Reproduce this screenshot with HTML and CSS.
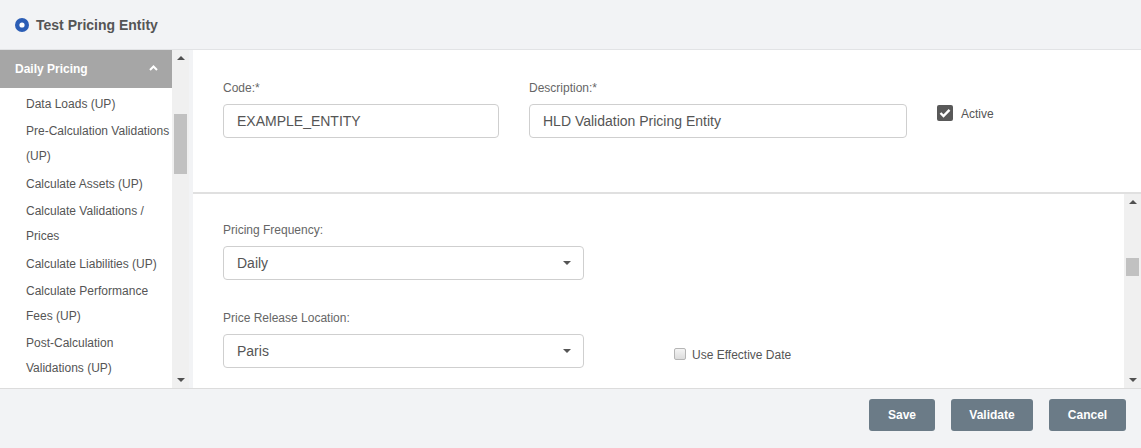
FILE: index.html
```html
<!DOCTYPE html>
<html>
<head>
<meta charset="utf-8">
<link rel="stylesheet" href="styles.css">
</head>
<body>
<header class="header">
  <svg class="dot-icon" width="14" height="14" viewBox="0 0 14 14"><circle cx="7" cy="7" r="7" fill="#2b5db5"/><circle cx="7" cy="7" r="2.6" fill="#fff"/></svg>
  <span class="title">Test Pricing Entity</span>
</header>
<div class="workspace">
  <aside class="sidebar">
    <nav class="nav">
      <div class="nav-head"><span>Daily Pricing</span>
        <svg class="chev" width="9" height="6" viewBox="0 0 9 6"><path d="M1 5 L4.5 1.5 L8 5" fill="none" stroke="#fff" stroke-width="2"/></svg>
      </div>
      <ul class="nav-list">
        <li>Data Loads (UP)</li>
        <li>Pre-Calculation Validations (UP)</li>
        <li>Calculate Assets (UP)</li>
        <li>Calculate Validations / Prices</li>
        <li>Calculate Liabilities (UP)</li>
        <li>Calculate Performance Fees (UP)</li>
        <li>Post-Calculation Validations (UP)</li>
      </ul>
    </nav>
    <div class="vscroll">
      <span class="arrow up"></span>
      <div class="track"><div class="thumb side-thumb"></div></div>
      <span class="arrow down"></span>
    </div>
  </aside>
  <main class="main">
    <section class="top">
      <div class="field code">
        <label class="lbl">Code:*</label>
        <div class="input">EXAMPLE_ENTITY</div>
      </div>
      <div class="field desc">
        <label class="lbl">Description:*</label>
        <div class="input">HLD Validation Pricing Entity</div>
      </div>
      <div class="active">
        <span class="cb-on"><svg width="12" height="10" viewBox="0 0 12 10"><path d="M1.5 5 L4.5 8 L10.5 1.8" fill="none" stroke="#fff" stroke-width="2.4"/></svg></span>
        <span class="cb-text">Active</span>
      </div>
    </section>
    <section class="bottom">
      <div class="bottom-content">
        <div class="field sel-field">
          <label class="lbl">Pricing Frequency:</label>
          <div class="input select">Daily<span class="caret"></span></div>
        </div>
        <div class="row2">
          <div class="field sel-field">
            <label class="lbl">Price Release Location:</label>
            <div class="input select">Paris<span class="caret"></span></div>
          </div>
          <div class="eff">
            <span class="cb-off"></span>
            <span class="cb-text">Use Effective Date</span>
          </div>
        </div>
      </div>
      <div class="vscroll">
        <span class="arrow up"></span>
        <div class="track"><div class="thumb main-thumb"></div></div>
        <span class="arrow down"></span>
      </div>
    </section>
  </main>
</div>
<footer class="footer">
  <button class="btn w-save">Save</button>
  <button class="btn w-validate">Validate</button>
  <button class="btn w-cancel">Cancel</button>
</footer>
</body>
</html>
```

FILE: styles.css
```css
* { box-sizing: border-box; }
html, body { margin: 0; padding: 0; }
body {
  width: 1141px;
  height: 448px;
  overflow: hidden;
  font-family: "Liberation Sans", Arial, sans-serif;
  background: #f2f3f5;
  color: #555;
}
.header {
  height: 50px;
  border-bottom: 1px solid #e2e3e5;
  display: flex;
  align-items: center;
  padding-left: 15px;
  gap: 7px;
}
.dot-icon { display: block; }
.title {
  font-size: 14px;
  font-weight: bold;
  color: #555;
}
.workspace {
  display: flex;
  height: 338px;
}
.sidebar {
  display: flex;
  width: 189px;
  margin-right: 4px;
  height: 100%;
}
.nav {
  width: 172px;
  background: #fff;
  overflow: hidden;
}
.nav-head {
  height: 38px;
  background: #a6a6a6;
  color: #fff;
  font-size: 12px;
  font-weight: bold;
  display: flex;
  align-items: center;
  justify-content: space-between;
  padding: 0 14px 0 15px;
}
.chev { display: block; margin-top: -3px; }
.nav-list {
  list-style: none;
  margin: 0;
  padding: 3px 0 0 26px;
  font-size: 12px;
  line-height: 25px;
  color: #555;
}
.nav-list li { padding: 1px 0 1.4px; }
.vscroll {
  width: 17px;
  flex: none;
  background: #f0f0f0;
  display: flex;
  flex-direction: column;
  align-items: center;
}
.track { flex: 1; width: 100%; position: relative; }
.thumb {
  position: absolute;
  left: 2px;
  right: 2px;
  background: #c1c1c1;
}
.side-thumb { top: 48px; height: 60px; }
.main-thumb { top: 48px; height: 18px; }
.arrow {
  width: 0; height: 0;
  border-left: 4px solid transparent;
  border-right: 4px solid transparent;
  margin: 6px 0;
}
.arrow.up { border-bottom: 4px solid #505050; }
.arrow.down { border-top: 4px solid #505050; }
.main {
  flex: 1;
  display: flex;
  flex-direction: column;
}
.top {
  height: 144px;
  background: #fff;
  border-bottom: 2px solid #e0e0e0;
  display: flex;
  align-items: flex-start;
  padding: 30px 0 0 30px;
  gap: 30px;
}
.field { display: flex; flex-direction: column; }
.lbl {
  font-size: 12px;
  line-height: 17px;
  color: #666;
  margin-bottom: 7px;
}
.input {
  height: 34px;
  border: 1px solid #cfcfcf;
  border-radius: 4px;
  font-size: 14px;
  color: #555;
  padding-left: 13px;
  display: flex;
  align-items: center;
}
.code { width: 276px; }
.desc { width: 378px; }
.active {
  display: flex;
  align-items: center;
  gap: 8px;
  margin-top: 25px;
}
.cb-on {
  width: 16px; height: 16px;
  background: #595959;
  border-radius: 2px;
  display: flex;
  align-items: center;
  justify-content: center;
}
.cb-on svg { display: block; }
.cb-text { font-size: 12px; color: #555; }
.active .cb-text { margin-top: 1px; }
.bottom {
  flex: 1;
  background: #fff;
  display: flex;
}
.bottom-content {
  flex: 1;
  padding: 28px 0 0 30px;
  display: flex;
  flex-direction: column;
  gap: 30px;
}
.sel-field { width: 361px; }
.select { justify-content: space-between; padding-right: 12px; }
.caret {
  width: 0; height: 0;
  border-left: 4px solid transparent;
  border-right: 4px solid transparent;
  border-top: 4px solid #555;
}
.row2 { display: flex; align-items: flex-end; gap: 90px; }
.eff {
  display: flex;
  align-items: center;
  gap: 6px;
  margin-bottom: 6px;
}
.eff .cb-text { margin-top: 3px; }
.cb-off {
  width: 12px; height: 12px;
  border: 1px solid #b5b5b5;
  border-radius: 2px;
  background: linear-gradient(#f4f4f4, #dcdcdc);
}
.footer {
  height: 60px;
  border-top: 1px solid #dcdcdc;
  display: flex;
  justify-content: flex-end;
  align-items: flex-start;
  padding: 10px 15px 0 0;
  gap: 16px;
}
.btn {
  height: 32px;
  border: none;
  border-radius: 3px;
  background: #6b7b87;
  color: #fff;
  font-family: "Liberation Sans", Arial, sans-serif;
  font-size: 12px;
  font-weight: bold;
  padding: 0;
}
.w-save { width: 66px; }
.w-validate { width: 82px; }
.w-cancel { width: 77px; }
```
